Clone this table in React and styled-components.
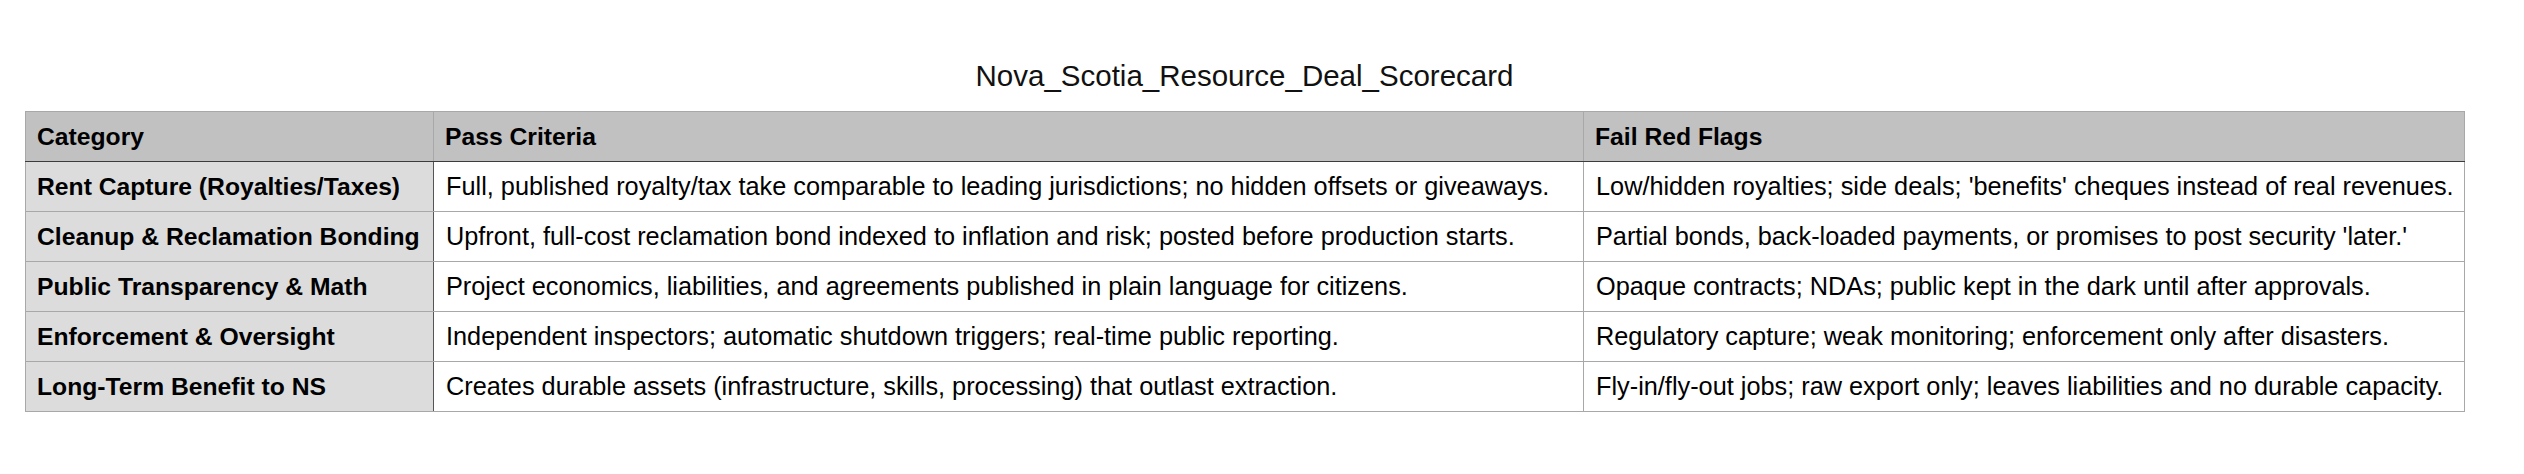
import React from "react";
import styled, { createGlobalStyle } from "styled-components";

const Global = createGlobalStyle`
  html, body { margin: 0; padding: 0; background: #ffffff; }
  body { font-family: "Liberation Sans", Arial, Helvetica, sans-serif; color: #000; }
`;

const Page = styled.div`
  width: 2524px;
  box-sizing: border-box;
  padding: 59px 60px 0 25px;
  display: flex;
  flex-direction: column;
  align-items: stretch;
`;

const Title = styled.h1`
  margin: 0 0 18px 0;
  font-size: 29.5px;
  line-height: 34px;
  font-weight: 400;
  text-align: center;
  color: #111;
`;

const Table = styled.table`
  width: 2439px;
  border-collapse: collapse;
  table-layout: fixed;
  font-size: 25.3px;
  border: 1px solid #a8a8a8;
`;

const Col = styled.col`
  width: ${(p) => p.$w}px;
`;

const HeadRow = styled.tr`
  height: 50px;
  background: #c0c1c0;
`;

const Row = styled.tr`
  height: 50px;
`;

const Th = styled.th`
  text-align: left;
  font-weight: 700;
  font-size: 24.7px;
  padding: 0 12px 0 11px;
  border-left: 1px solid #a8a8a8;
  border-right: 1px solid #a8a8a8;
  border-bottom: 1px solid #3c3c3c;
  white-space: nowrap;
  overflow: hidden;
  vertical-align: middle;
`;

const CatCell = styled.td`
  background: #dcdcdc;
  font-weight: 700;
  font-size: 24.7px;
  padding: 0 4px 0 11px;
  border-top: 1px solid #a8a8a8;
  border-bottom: 1px solid #a8a8a8;
  border-right: 1px solid #555555;
  white-space: nowrap;
  overflow: hidden;
  vertical-align: middle;
`;

const Cell = styled.td`
  background: #ffffff;
  padding: 0 12px;
  border: 1px solid #a8a8a8;
  white-space: nowrap;
  overflow: hidden;
  vertical-align: middle;
`;

const rows = [
  [
    "Rent Capture (Royalties/Taxes)",
    "Full, published royalty/tax take comparable to leading jurisdictions; no hidden offsets or giveaways.",
    "Low/hidden royalties; side deals; 'benefits' cheques instead of real revenues.",
  ],
  [
    "Cleanup & Reclamation Bonding",
    "Upfront, full-cost reclamation bond indexed to inflation and risk; posted before production starts.",
    "Partial bonds, back-loaded payments, or promises to post security 'later.'",
  ],
  [
    "Public Transparency & Math",
    "Project economics, liabilities, and agreements published in plain language for citizens.",
    "Opaque contracts; NDAs; public kept in the dark until after approvals.",
  ],
  [
    "Enforcement & Oversight",
    "Independent inspectors; automatic shutdown triggers; real-time public reporting.",
    "Regulatory capture; weak monitoring; enforcement only after disasters.",
  ],
  [
    "Long-Term Benefit to NS",
    "Creates durable assets (infrastructure, skills, processing) that outlast extraction.",
    "Fly-in/fly-out jobs; raw export only; leaves liabilities and no durable capacity.",
  ],
];

export default function App() {
  return (
    <>
      <Global />
      <Page>
        <Title>Nova_Scotia_Resource_Deal_Scorecard</Title>
        <Table>
          <colgroup>
            <Col $w={408} />
            <Col $w={1150} />
            <Col $w={881} />
          </colgroup>
          <thead>
            <HeadRow>
              <Th>Category</Th>
              <Th>Pass Criteria</Th>
              <Th>Fail Red Flags</Th>
            </HeadRow>
          </thead>
          <tbody>
            {rows.map((r) => (
              <Row key={r[0]}>
                <CatCell>{r[0]}</CatCell>
                <Cell>{r[1]}</Cell>
                <Cell>{r[2]}</Cell>
              </Row>
            ))}
          </tbody>
        </Table>
      </Page>
    </>
  );
}
